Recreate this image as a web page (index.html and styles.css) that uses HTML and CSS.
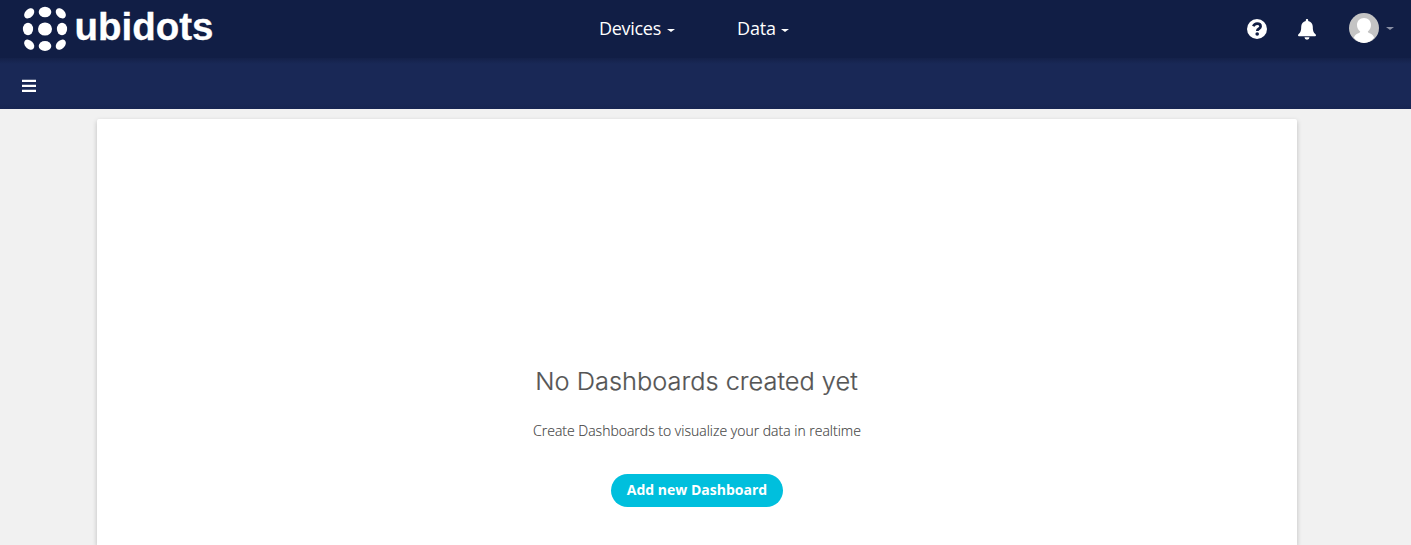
FILE: index.html
```html
<!DOCTYPE html>
<html lang="en">
<head>
<meta charset="utf-8">
<title>Ubidots</title>
<link rel="stylesheet" href="styles.css">
</head>
<body>
<header class="topbar">
  <a class="logo">
    <svg width="210" height="58" viewBox="0 0 210 58" fill="#fff">
      <ellipse cx="29" cy="12" rx="6.3" ry="5.2"/>
      <ellipse cx="29" cy="29" rx="7" ry="6.6"/>
      <ellipse cx="29" cy="46" rx="6.3" ry="5.1"/>
      <ellipse cx="12" cy="29" rx="5.1" ry="6.2"/>
      <ellipse cx="46" cy="29" rx="5.1" ry="6.2"/>
      <ellipse cx="13.2" cy="13.3" rx="5.9" ry="4.1" transform="rotate(-45 13.2 13.3)"/>
      <ellipse cx="44.8" cy="13.3" rx="5.9" ry="4.1" transform="rotate(45 44.8 13.3)"/>
      <ellipse cx="13.2" cy="44.7" rx="5.9" ry="4.1" transform="rotate(45 13.2 44.7)"/>
      <ellipse cx="44.8" cy="44.7" rx="5.9" ry="4.1" transform="rotate(-45 44.8 44.7)"/>
      <text class="logo-text" x="58.500" y="39.700" textLength="139" lengthAdjust="spacingAndGlyphs">ubidots</text>
    </svg>
  </a>
  <nav class="menu">
    <a class="menu-item"><span class="devices">Devices</span><i class="caret"></i></a>
    <a class="menu-item"><span class="data">Data</span><i class="caret"></i></a>
  </nav>
  <div class="tools">
    <svg class="help" width="20" height="20" viewBox="0 0 20 20">
      <circle cx="10" cy="10" r="10" fill="#fff"/>
      <path d="M6.300 7.300C7.100 5.400 8.400 4.600 10.100 4.600c2 0 3.500 1.100 3.500 2.800 0 2.500-3.300 2.200-3.300 4.600" fill="none" stroke="#111e45" stroke-width="2.700"/>
      <circle cx="10.200" cy="15" r="1.800" fill="#111e45"/>
    </svg>
    <svg class="bell" width="18" height="21" viewBox="0 0 18 21" fill="#fff">
      <path d="M9 0c.7 0 1.200.5 1.200 1.200v.7c2.800.6 4.600 2.800 4.600 5.800 0 4.200.8 5.800 2.700 7.500.3.300.5.700.5 1.100 0 .6-.4.900-1 .900H1c-.6 0-1-.3-1-.9 0-.4.2-.8.5-1.100 1.900-1.700 2.700-3.300 2.700-7.500 0-3 1.800-5.200 4.600-5.800v-.7C7.800.5 8.300 0 9 0zM6.500 18.200h5a2.500 2.500 0 0 1-5 0z"/>
    </svg>
    <svg class="avatar" width="30" height="30" viewBox="0 0 30 30">
      <circle cx="15" cy="15" r="15" fill="#c4c4c4"/>
      <path d="M15 5c4.300 0 7 3 7 7 0 2.800-1.300 5.200-3.200 6.500.2 1 .8 1.400 1.900 1.800 2.300.7 3.700 2.200 4.500 4.500A14.500 14.500 0 0 1 15 30a14.500 14.500 0 0 1-10.200-5.200c.8-2.300 2.200-3.800 4.500-4.500 1.100-.4 1.700-.8 1.900-1.800C9.300 17.200 8 14.800 8 12c0-4 2.700-7 7-7z" fill="#fff"/>
    </svg>
    <i class="caret caret-dim"></i>
  </div>
</header>
<div class="subbar">
  <svg width="14" height="14" viewBox="0 0 14 14" fill="#fff"><path d="M0 .7h14v2.300H0zM0 5.700h14V8H0zM0 10.700h14V13H0z"/></svg>
</div>
<main class="panel">
  <h1 class="title">No Dashboards created yet</h1>
  <p class="hint">Create Dashboards to visualize your data in realtime</p>
  <button class="add">Add new Dashboard</button>
</main>
</body>
</html>
```
FILE: styles.css
```css
* { box-sizing: border-box; }
body {
  margin: 0;
  height: 545px;
  overflow: hidden;
  background: #f1f1f1;
  font-family: "Open Sans", sans-serif;
}
.topbar {
  display: grid;
  grid-template-columns: 599px 1fr 165px;
  height: 58px;
  background: #111e45;
}
.logo { padding-left: 16px; height: 58px; }
.logo svg { display: block; }
.logo-text {
  font: bold 38px "Liberation Sans", sans-serif;
  stroke: #fff;
  stroke-width: .3px;
  stroke-linejoin: round;
}
.menu { display: flex; align-items: center; gap: 61px; height: 56px; }
.menu-item {
  display: flex;
  align-items: center;
  color: #fff;
  font-size: 18px;
  line-height: 24px;
}
.devices { width: 69px; letter-spacing: -.3px; }
.data { width: 45px; letter-spacing: -.15px; }
.caret {
  margin-top: 5px;
  border: 4px solid transparent;
  border-top-color: #fff;
  border-bottom: 0;
  border-top-width: 3.5px;
}
.menu-item .caret { margin-left: -1px; }
.tools { display: flex; align-items: center; height: 58px; }
.help { margin-left: 1px; }
.bell { margin-left: 31px; }
.avatar { margin: -3px 0 0 33px; }
.tools .caret-dim { margin: -1px 0 0 7px; border-top-color: #8b91a5; }
.menu-item + .menu-item { margin-left: 1px; }
.subbar {
  height: 51px;
  padding: 21px 22px 0;
  background: linear-gradient(#142149, #192856 6px, #192856 45px, #172552);
}
.subbar svg { display: block; }
.panel {
  display: flex;
  flex-direction: column;
  align-items: center;
  width: 1200px;
  height: 426px;
  margin: 10px 0 0 97px;
  padding-top: 248px;
  background: #fff;
  border-radius: 2px 2px 0 0;
  box-shadow: 0 2px 5px rgba(0, 0, 0, .22);
}
.title {
  margin: 0;
  color: #555;
  font: 300 24px/30px Inter, sans-serif;
  letter-spacing: 0;
  white-space: nowrap;
  transform: scaleX(1.057);
  -webkit-text-stroke: .2px #555;
}
.hint {
  margin: 24px 0 0;
  color: #444;
  font-size: 14px;
  font-weight: 300;
  line-height: 20px;
  white-space: nowrap;
  -webkit-text-stroke: .15px #444;
}
.add {
  width: 172px;
  height: 33px;
  margin-top: 33px;
  padding: 0 0 2px;
  border: 0;
  border-radius: 17px;
  background: #00bfdd;
  color: #fff;
  font: bold 14px/20px "Open Sans", sans-serif;
  white-space: nowrap;
}
```
